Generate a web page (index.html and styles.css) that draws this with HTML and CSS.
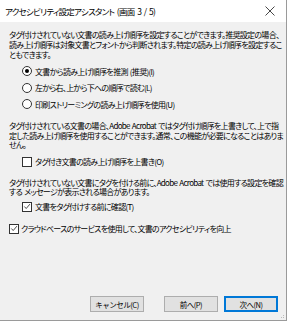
FILE: index.html
```html
<!DOCTYPE html>
<html lang="ja">
<head>
  <meta charset="UTF-8">
  <meta name="viewport" content="width=device-width, initial-scale=1.0">
  <title>アクセシビリティ設定アシスタント</title>
  <link rel="stylesheet" href="styles.css">
</head>
<body>

  <div class="window">
    <div class="titlebar">
      <span class="title">アクセシビリティ設定アシスタント (画面 3 / 5)</span>
      <svg class="close" width="10" height="10" viewBox="0 0 10 10">
        <path d="M0.5 0.5 L9.5 9.5 M9.5 0.5 L0.5 9.5" stroke="#333" stroke-width="0.9" fill="none"/>
      </svg>
    </div>

    <div class="content">
      <p class="desc desc-first">
        <span>タグ付けされていない文書の読み上げ順序を設定することができます。推奨設定の場合、</span>
        <span>読み上げ順序は対象文書とフォントから判断されます。特定の読み上げ順序を設定するこ</span>
        <span>ともできます。</span>
      </p>

      <div class="options">
        <label class="option">
          <span class="radio checked"></span>
          <span>文書から読み上げ順序を推測 (推奨)(I)</span>
        </label>
        <label class="option">
          <span class="radio"></span>
          <span>左から右、上から下への順序で読む(L)</span>
        </label>
        <label class="option">
          <span class="radio"></span>
          <span>印刷ストリーミングの読み上げ順序を使用(U)</span>
        </label>
      </div>

      <p class="desc">
        <span>タグ付けされている文書の場合、Adobe Acrobat ではタグ付け順序を上書きして、上で指</span>
        <span>定した読み上げ順序を使用することができます。通常、この機能が必要になることはありま</span>
        <span>せん。</span>
      </p>
      <label class="option check-row">
        <span class="checkbox"></span>
        <span>タグ付き文書の読み上げ順序を上書き(O)</span>
      </label>

      <p class="desc">
        <span>タグ付けされていない文書にタグを付ける前に、Adobe Acrobat では使用する設定を確認</span>
        <span>する メッセージが表示される場合があります。</span>
      </p>
      <label class="option check-row check-last">
        <span class="checkbox checked">
          <svg width="9" height="9" viewBox="0 0 9 9"><path d="M1.5 4.5 L3.6 6.8 L7.8 1.8" stroke="#222" stroke-width="0.9" fill="none"/></svg>
        </span>
        <span>文書をタグ付けする前に確認(T)</span>
      </label>

      <label class="option cloud-row">
        <span class="checkbox checked">
          <svg width="9" height="9" viewBox="0 0 9 9"><path d="M1.5 4.5 L3.6 6.8 L7.8 1.8" stroke="#222" stroke-width="0.9" fill="none"/></svg>
        </span>
        <span>クラウドベースのサービスを使用して、文書のアクセシビリティを向上</span>
      </label>
    </div>

    <div class="buttons">
      <button class="btn">キャンセル(C)</button>
      <button class="btn btn-prev">前へ(P)</button>
      <button class="btn btn-default">次へ(N)</button>
    </div>

    <svg class="grip" width="4" height="4" viewBox="0 0 4 4">
      <rect x="2" y="0" width="1" height="1" fill="#bbb"/>
      <rect x="0" y="2" width="1" height="1" fill="#bbb"/>
      <rect x="2" y="2" width="1" height="1" fill="#bbb"/>
    </svg>
  </div>

</body>
</html>
```

FILE: styles.css
```css
body {
  margin: 0;
  padding: 0;
  background-color: #fff;
  font-family: "Noto Sans CJK JP", "Noto Sans", sans-serif;
  font-feature-settings: "palt";
  color: #000;
}
.window {
  position: relative;
  width: 286px;
  height: 320px;
  background-color: #f0f0f0;
  border-right: 1px solid #9a9a9a;
  border-bottom: 1px solid #9a9a9a;
  display: flex;
  flex-direction: column;
}
.titlebar {
  height: 22px;
  background-color: #fff;
  display: flex;
  align-items: center;
  justify-content: space-between;
  padding: 0 11px 0 5px;
}
.title {
  font-size: 8.5px;
  letter-spacing: -0.75px;
  word-spacing: 1.5px;
  white-space: nowrap;
}
.content {
  padding: 8px 0 0 9px;
  font-size: 8px;
  letter-spacing: -0.7px;
  word-spacing: 1px;
  flex: 1;
}
.desc {
  margin: 0;
  line-height: 9.5px;
}
.desc span {
  display: block;
  white-space: nowrap;
}
.desc-first {
  line-height: 10px;
}
.options {
  margin: 6px 0 12px 13px;
  display: flex;
  flex-direction: column;
  gap: 6.5px;
}
.option {
  display: flex;
  align-items: center;
  gap: 3px;
  white-space: nowrap;
  height: 10px;
}
.radio {
  width: 8px;
  height: 8px;
  border: 1px solid #333;
  border-radius: 50%;
  background-color: #fff;
  display: flex;
  align-items: center;
  justify-content: center;
}
.radio.checked::after {
  content: "";
  width: 4px;
  height: 4px;
  border-radius: 50%;
  background-color: #000;
}
.checkbox {
  width: 8px;
  height: 8px;
  border: 1px solid #333;
  background-color: #fff;
  display: flex;
  align-items: center;
  justify-content: center;
}
.check-row {
  margin: 7px 0 11px 13px;
}
.check-last {
  margin-top: 5px;
  margin-bottom: 12px;
}
.cloud-row {
  gap: 2px;
}
.buttons {
  display: flex;
  justify-content: flex-end;
  gap: 6px;
  padding: 0 8px 8px 0;
}
.btn {
  width: 54px;
  height: 16px;
  padding: 0;
  font-family: inherit;
  font-size: 7.5px;
  letter-spacing: -0.5px;
  background-color: #e1e1e1;
  border: 1px solid #adadad;
  color: #000;
}
.btn-prev {
  margin-left: 14px;
}
.btn-default {
  border: 1px solid #0078d7;
  box-shadow: inset 0 0 0 1px #0078d7;
}
.grip {
  position: absolute;
  right: 1px;
  bottom: 1px;
}
```
